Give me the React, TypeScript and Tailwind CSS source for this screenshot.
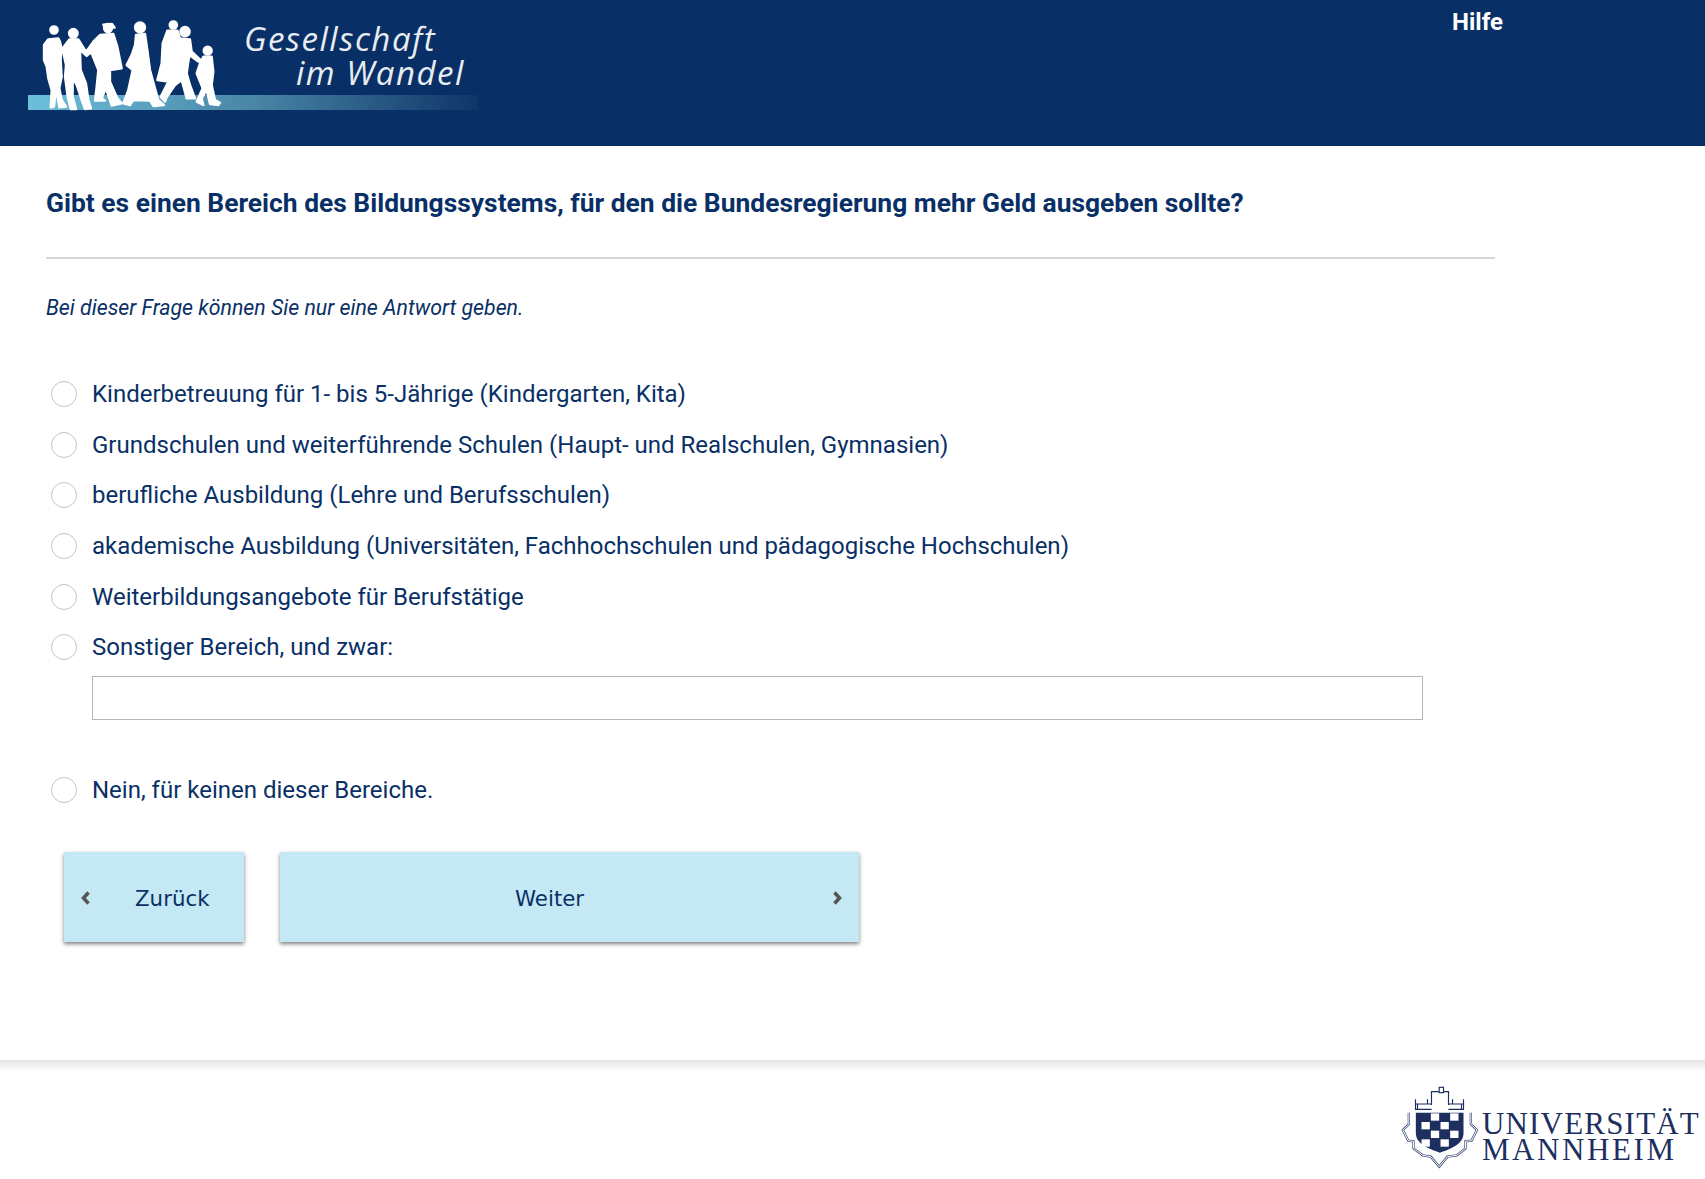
const options = [
  "Kinderbetreuung für 1- bis 5-Jährige (Kindergarten, Kita)",
  "Grundschulen und weiterführende Schulen (Haupt- und Realschulen, Gymnasien)",
  "berufliche Ausbildung (Lehre und Berufsschulen)",
  "akademische Ausbildung (Universitäten, Fachhochschulen und pädagogische Hochschulen)",
  "Weiterbildungsangebote für Berufstätige",
  "Sonstiger Bereich, und zwar:",
];

const Radio = ({ label }: { label: string }) => (
  <label className="flex items-center h-[50.6px]">
    <span className="ml-[51px] w-[26px] h-[26px] rounded-full border border-[#c4c4c4] bg-white shrink-0"></span>
    <span className="ml-[15px] text-[24px] text-[#093066]">{label}</span>
  </label>
);

const Logo = () => (
  <div className="relative w-[450px] h-[100px] mt-[12px] ml-[28px]">
    <div className="absolute left-0 top-[83px] w-[450px] h-[15px] bg-gradient-to-r from-[#6cc0dc] via-[#4a86a6] to-[#0f3568]"></div>
    <svg
      className="absolute left-[2px] top-[-2px] blur-[0.5px]"
      width="200"
      height="105"
      viewBox="0 0 600 315"
      fill="#ffffff"
      stroke="#ffffff"
      strokeWidth="7"
      strokeLinejoin="round"
    >
      {/* people, left to right */}
      <circle cx="72" cy="60" r="11" />
      <path d="M55 88 L85 85 Q95 100 93 125 L92 150 L95 200 L88 235 L95 270 L108 290 L88 292 L85 275 L78 235 L72 290 L62 292 L65 240 L55 205 L50 170 L42 150 L42 105 Z" />
      <circle cx="130" cy="70" r="13" />
      <path d="M118 88 L145 88 L165 120 L178 130 L170 138 L150 120 L152 180 L168 220 L175 270 L183 295 L165 297 L155 270 L140 225 L128 205 L128 260 L138 297 L122 297 L113 260 L105 200 L108 165 L100 130 L90 125 Z" />
      <circle cx="234" cy="54" r="12" />
      <path d="M220 44 L246 42 L254 53 L225 54 Z" />
      <path d="M210 75 L250 72 L262 110 L275 175 L240 180 L240 215 L262 265 L275 280 L245 287 L228 235 L215 265 L225 272 L195 272 L200 230 L205 180 L185 130 L165 130 L190 95 Z" />
      <circle cx="330" cy="52" r="15" />
      <path d="M318 75 L345 72 L352 120 L360 180 L375 235 L385 270 L402 285 L370 288 L360 272 L310 270 L300 285 L280 280 L295 240 L308 180 L290 165 L305 135 L315 105 Z" />
      <circle cx="430" cy="45" r="11" />
      <circle cx="465" cy="65" r="14" />
      <path d="M412 62 L442 62 L450 85 L480 88 L485 125 L512 150 L505 155 L478 135 L470 190 L480 225 L495 265 L470 265 L455 210 L435 225 L410 262 L405 275 L392 260 L415 215 L382 210 L395 160 L398 100 Z" />
      <circle cx="533" cy="122" r="12" />
      <path d="M520 140 L545 140 L550 185 L545 225 L555 270 L570 278 L565 285 L540 282 L530 240 L515 265 L520 285 L500 275 L518 235 L500 190 L510 160 Z" />
    </svg>
    <div className="absolute left-[216px] top-[10px] text-[33px] leading-[33px] italic text-[#e8edf2] font-['Open_Sans',sans-serif] tracking-[1.5px] whitespace-nowrap">
      Gesellschaft
    </div>
    <div className="absolute left-[268px] top-[44px] text-[33px] leading-[33px] italic text-[#e8edf2] font-['Open_Sans',sans-serif] tracking-[1.5px] whitespace-nowrap">
      im Wandel
    </div>
  </div>
);

const Crest = () => (
  <svg width="82" height="95" viewBox="18 0 245 285" className="shrink-0">
    <g fill="none" stroke="#1d2f5f" strokeWidth="3.5">
      <rect x="135" y="22" width="13" height="16" />
      <path d="M112 75 V35 H135 M148 35 H163 V75" />
      <path d="M64 58 V88 H112 M64 72 H112 M70 72 V88 M100 58 V72" />
      <path d="M208 58 V88 H163 M208 72 H163 M202 72 V88 M175 58 V72" />
    </g>
    {/* fortress outline, double line */}
    <g fill="none">
      <path
        d="M44 98 V132 L26 150 L42 182 L58 184 V205 L86 226 L110 230 L135 260 L160 230 L188 226 L214 205 V184 L232 182 L248 150 L230 132 V98"
        stroke="#3f4d78"
        strokeWidth="7"
      />
      <path
        d="M44 98 V132 L26 150 L42 182 L58 184 V205 L86 226 L110 230 L135 260 L160 230 L188 226 L214 205 V184 L232 182 L248 150 L230 132 V98"
        stroke="#ffffff"
        strokeWidth="3"
      />
    </g>
    <path d="M65 98 H208 V160 C208 190 175 206 137 218 C100 206 65 190 65 160 Z" fill="#1d2f5f" />
    <g fill="#ffffff">
      <rect x="110" y="100" width="25" height="22" />
      <rect x="168" y="100" width="25" height="22" />
      <rect x="82" y="126" width="25" height="22" />
      <rect x="139" y="126" width="25" height="22" />
      <rect x="110" y="152" width="25" height="22" />
      <rect x="168" y="152" width="25" height="22" />
      <rect x="82" y="178" width="25" height="22" />
      <rect x="139" y="178" width="25" height="22" />
    </g>
  </svg>
);

const App = () => {
  return (
    <div className="w-[1705px] h-[1179px] bg-white overflow-hidden font-['Roboto',sans-serif] text-[#093066]">
      <header className="h-[146px] bg-[#093066] flex">
        <Logo />
        <a className="ml-[974px] mt-[7px] h-[30px] text-[24px] leading-[30px] font-bold text-white">Hilfe</a>
      </header>

      <main className="pl-[46px]">
        <h1 className="mt-[41px] text-[26.4px] leading-[32px] font-bold whitespace-nowrap">
          Gibt es einen Bereich des Bildungssystems, für den die Bundesregierung mehr Geld ausgeben sollte?
        </h1>
        <hr className="mt-[38px] w-[1449px] border-0 h-[2px] bg-[#d6d6d6]" />
        <p className="mt-[35px] text-[21.3px] leading-[28px] italic">Bei dieser Frage können Sie nur eine Antwort geben.</p>

        <div className="-ml-[46px] mt-[47px]">
          {options.map((o) => (
            <Radio key={o} label={o} />
          ))}
          <input
            type="text"
            className="block ml-[92px] mt-[3px] w-[1331px] h-[44px] border border-[#b5b5b5] bg-white"
          />
          <div className="mt-[45px]">
            <Radio label="Nein, für keinen dieser Bereiche." />
          </div>
        </div>

        <div className="flex ml-[18px] mt-[37px] gap-[36px] font-['DejaVu_Sans',sans-serif] text-[21.33px]">
          <button className="relative w-[180px] h-[90px] pt-[3px] bg-[#c5e8f5] shadow-[0_2px_4px_rgba(0,0,0,0.5)] flex items-center">
            <svg className="absolute left-[17px] top-[39px]" width="10" height="14" viewBox="0 0 10 14" fill="none" stroke="#555555" strokeWidth="3.5">
              <path d="M7.5 1.5 L2.5 7 L7.5 12.5" />
            </svg>
            <span className="ml-[71px]">Zurück</span>
          </button>
          <button className="relative w-[579px] h-[90px] pt-[3px] bg-[#c5e8f5] shadow-[0_2px_4px_rgba(0,0,0,0.5)] flex items-center">
            <span className="ml-[235px]">Weiter</span>
            <svg className="absolute right-[17px] top-[39px]" width="10" height="14" viewBox="0 0 10 14" fill="none" stroke="#555555" strokeWidth="3.5">
              <path d="M2.5 1.5 L7.5 7 L2.5 12.5" />
            </svg>
          </button>
        </div>
      </main>

      <footer className="mt-[118px] h-[119px] bg-gradient-to-b from-[#e4e4e4] to-white to-[12px] flex justify-end">
        <div className="flex mt-[20px] mr-[5px] h-[95px]">
          <Crest />
          <div className="mt-[31px] font-['Liberation_Serif',serif] text-[31px] leading-[26px] text-[#1d2f5f]">
            <div className="tracking-[1.2px]">UNIVERSITÄT</div>
            <div className="tracking-[2.6px]">MANNHEIM</div>
          </div>
        </div>
      </footer>
    </div>
  );
};

export default App;
